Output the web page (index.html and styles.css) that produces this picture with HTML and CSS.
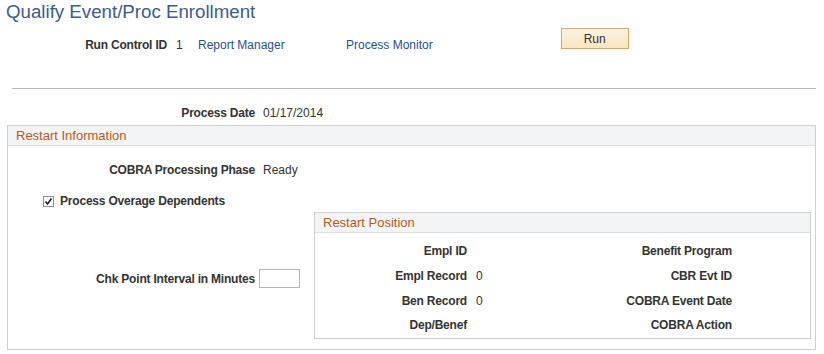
FILE: index.html
```html
<!DOCTYPE html>
<html lang="en">
<head>
    <meta charset="UTF-8">
    <title>Qualify Event/Proc Enrollment</title>
    <link rel="stylesheet" href="styles.css">
</head>
<body>
    <h1 class="page-title">Qualify Event/Proc Enrollment</h1>

    <div class="runbar">
        <div class="run-info">
            <span class="label run-label">Run Control ID</span>
            <span class="value run-id">1</span>
            <a href="#" class="link report-link">Report Manager</a>
            <a href="#" class="link">Process Monitor</a>
        </div>
        <button class="run-btn">Run</button>
    </div>

    <div class="divider"></div>

    <div class="field date-row">
        <span class="label">Process Date</span>
        <span class="value">01/17/2014</span>
    </div>

    <section class="group restart-info">
        <div class="group-head">Restart Information</div>
        <div class="group-body">
            <div class="field phase-row">
                <span class="label">COBRA Processing Phase</span>
                <span class="value">Ready</span>
            </div>

            <label class="check-row">
                <span class="checkbox">
                    <svg width="9" height="9" viewBox="0 0 9 9"><path d="M1.5 4.5 L3.5 7 L7.5 1.5" fill="none" stroke="#1a1a1a" stroke-width="1.6"/></svg>
                </span>
                <span class="label">Process Overage Dependents</span>
            </label>

            <div class="split">
                <div class="field chk-row">
                    <span class="label">Chk Point Interval in Minutes</span>
                    <input type="text" class="text-input">
                </div>

                <section class="group restart-pos">
                    <div class="group-head">Restart Position</div>
                    <div class="pos-grid">
                        <span class="label">Empl ID</span>
                        <span class="value"></span>
                        <span class="label">Benefit Program</span>

                        <span class="label">Empl Record</span>
                        <span class="value">0</span>
                        <span class="label">CBR Evt ID</span>

                        <span class="label">Ben Record</span>
                        <span class="value">0</span>
                        <span class="label">COBRA Event Date</span>

                        <span class="label">Dep/Benef</span>
                        <span class="value"></span>
                        <span class="label">COBRA Action</span>
                    </div>
                </section>
            </div>
        </div>
    </section>
</body>
</html>
```

FILE: styles.css
```css
body {
    margin: 0;
    font-family: "Liberation Sans", Arial, sans-serif;
    font-size: 12px;
    color: #333;
    background: #fff;
}
.page-title {
    margin: 0;
    padding: 1px 0 0 6px;
    font-size: 18.7px;
    font-weight: normal;
    line-height: 22px;
    color: #3b5b8f;
}
.label {
    font-weight: bold;
    letter-spacing: -0.2px;
    color: #333;
}
.value {
    color: #333;
}
.link {
    color: #1f4f98;
    text-decoration: none;
}
.runbar {
    display: flex;
    align-items: flex-start;
    margin-top: 5px;
    height: 60px;
}
.run-info {
    display: flex;
    padding-top: 10px;
    line-height: 14px;
}
.run-label {
    width: 167px;
    text-align: right;
}
.run-id {
    margin-left: 9px;
    width: 22px;
}
.report-link {
    width: 148px;
}
.run-btn {
    margin-left: 128px;
    width: 68px;
    height: 21px;
    padding: 0;
    font-family: "Liberation Sans", Arial, sans-serif;
    font-size: 12px;
    color: #333;
    border: 1px solid #e0a56a;
    border-radius: 0;
    background: linear-gradient(#fdf3e0, #fbe5c2);
}
.divider {
    margin: 0 8px 0 12px;
    border-top: 1px solid #b9b9b9;
}
.field {
    display: flex;
    align-items: center;
    line-height: 14px;
}
.field .label {
    text-align: right;
    margin-right: 8px;
}
.date-row {
    margin-top: 17px;
}
.date-row .label {
    width: 255px;
}
.group {
    border: 1px solid #cfcfcf;
}
.group-head {
    height: 19px;
    line-height: 19px;
    padding-left: 8px;
    font-size: 13px;
    color: #b9591c;
    background: #f2f4f5;
    border-bottom: 1px solid #dedede;
}
.restart-info {
    margin: 5px 8px 0 7px;
    height: 225px;
    box-sizing: border-box;
}
.phase-row {
    margin-top: 17px;
}
.phase-row .label {
    width: 247px;
}
.check-row {
    display: flex;
    align-items: center;
    margin: 17px 0 0 35px;
    line-height: 14px;
}
.checkbox {
    display: flex;
    align-items: center;
    justify-content: center;
    width: 9px;
    height: 9px;
    margin-right: 6px;
    border: 1px solid #8e8f8f;
    background: #fff;
}
.split {
    display: flex;
    align-items: center;
    margin-top: 4px;
}
.chk-row {
    width: 306px;
    margin-top: 6px;
}
.chk-row .label {
    width: 247px;
    margin-right: 4px;
}
.text-input {
    width: 41px;
    height: 19px;
    box-sizing: border-box;
    margin: 0;
    border: 1px solid #b5b5b5;
}
.restart-pos {
    width: 497px;
    height: 127px;
    box-sizing: border-box;
}
.pos-grid {
    display: grid;
    grid-template-columns: 152px 100px 147px;
    column-gap: 9px;
    grid-auto-rows: 24.7px;
    align-items: center;
    padding-top: 6px;
}
.pos-grid .label {
    text-align: right;
}
```
